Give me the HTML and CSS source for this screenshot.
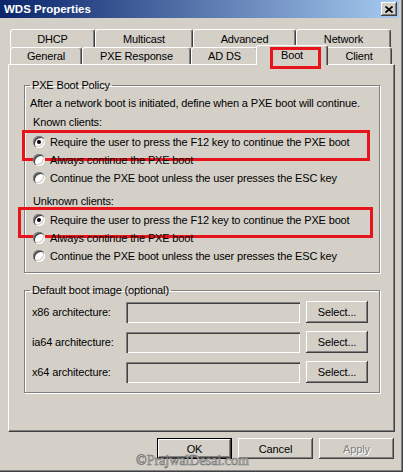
FILE: index.html
```html
<!DOCTYPE html>
<html>
<head>
<meta charset="utf-8">
<title>WDS Properties</title>
<link rel="stylesheet" href="styles.css">
</head>
<body>
<div class="window">
  <div class="titlebar">
    <span class="title">WDS Properties</span>
    <span class="close"><svg width="8" height="7" viewBox="0 0 8 7"><path d="M0.5 0.5L7.5 6.5M7.5 0.5L0.5 6.5" stroke="#000" stroke-width="1.7"/></svg></span>
  </div>
  <div class="content">
    <div class="tabs">
      <div class="tabrow row1">
        <div class="tab t-dhcp">DHCP</div>
        <div class="tab t-multicast">Multicast</div>
        <div class="tab t-advanced">Advanced</div>
        <div class="tab t-network">Network</div>
      </div>
      <div class="tabrow row2">
        <div class="tab t-general">General</div>
        <div class="tab t-pxe">PXE Response</div>
        <div class="tab t-adds">AD DS</div>
        <div class="tab t-boot sel">Boot</div>
        <div class="tab t-client">Client</div>
      </div>
    </div>
    <div class="panel">
      <fieldset class="group g1">
        <legend>PXE Boot Policy</legend>
        <div class="gbody">
          <div class="desc">After a network boot is initiated, define when a PXE boot will continue.</div>
          <div class="sub">Known clients:</div>
          <div class="radios">
            <div class="radio-row hl1"><span class="radio on"></span><span>Require the user to press the F12 key to continue the PXE boot</span></div>
            <div class="radio-row"><span class="radio"></span><span>Always continue the PXE boot</span></div>
            <div class="radio-row"><span class="radio"></span><span>Continue the PXE boot unless the user presses the ESC key</span></div>
          </div>
          <div class="sub sub2">Unknown clients:</div>
          <div class="radios radios2">
            <div class="radio-row hl2"><span class="radio on"></span><span>Require the user to press the F12 key to continue the PXE boot</span></div>
            <div class="radio-row"><span class="radio"></span><span>Always continue the PXE boot</span></div>
            <div class="radio-row"><span class="radio"></span><span>Continue the PXE boot unless the user presses the ESC key</span></div>
          </div>
        </div>
      </fieldset>
      <fieldset class="group g2">
        <legend>Default boot image (optional)</legend>
        <div class="gbody">
          <div class="row"><span class="label">x86 architecture:</span><span class="field"></span><span class="btn small">Select...</span></div>
          <div class="row"><span class="label">ia64 architecture:</span><span class="field"></span><span class="btn small">Select...</span></div>
          <div class="row"><span class="label">x64 architecture:</span><span class="field"></span><span class="btn small">Select...</span></div>
        </div>
      </fieldset>
    </div>
    <div class="footer">
      <span class="btn big default">OK</span>
      <span class="btn big">Cancel</span>
      <span class="btn big disabled">Apply</span>
    </div>
  </div>
  <div class="watermark">©PrajwalDesai.com</div>
</div>
</body>
</html>
```
FILE: styles.css
```css
* { box-sizing: border-box; }
html, body { margin: 0; padding: 0; }
body {
  background: #d4d0c8;
  font-family: "Liberation Sans", Arial, sans-serif;
  font-size: 11px;
  letter-spacing: -0.15px;
  color: #000;
}
.window {
  width: 403px;
  height: 472px;
  position: relative;
  background: #d4d0c8;
  box-shadow: inset -1px -1px 0 #404040, inset -2px -2px 0 #808080;
  overflow: hidden;
}
.titlebar {
  height: 18px;
  margin-right: 4px;
  background: linear-gradient(to right, #0a246a, #a6caf0);
  display: flex;
  align-items: center;
  justify-content: space-between;
  padding: 0 2px 0 4px;
}
.title {
  color: #fff;
  font-weight: bold;
  font-size: 11.5px;
  letter-spacing: 0;
}
.close {
  width: 16px;
  height: 14px;
  background: #d4d0c8;
  box-shadow: inset -1px -1px 0 #404040, inset 1px 1px 0 #fff, inset -2px -2px 0 #808080;
  display: flex;
  align-items: center;
  justify-content: center;
}
.close svg { display: block; }
.content { padding: 11px 8px 0 8px; }
.tabs { padding-left: 2px; }
.tabrow { display: flex; align-items: flex-start; height: 18px; }
.row2 { height: 17px; }
.tab {
  height: 100%;
  background: #d4d0c8;
  border-top: 1px solid #fff;
  border-left: 1px solid #fff;
  border-right: 1px solid #404040;
  box-shadow: inset -1px 0 0 #808080;
  border-radius: 3px 3px 0 0;
  display: flex;
  align-items: center;
  justify-content: center;
  white-space: nowrap;
  flex: none;
}
.t-dhcp { width: 85px; }
.t-multicast { width: 98px; }
.t-advanced { width: 103px; }
.t-network { width: 95px; }
.t-general { width: 72px; }
.t-pxe { width: 109px; }
.t-adds { width: 67px; }
.t-boot { width: 68px; }
.t-client { width: 66px; }
.tab.sel {
  position: relative;
  z-index: 2;
  width: 72px;
  height: 20px;
  margin: -2px -2px 0 -2px;
  padding-bottom: 2px;
}
.tab.sel::after {
  content: "";
  position: absolute;
  left: 13px;
  top: 1px;
  width: 45px;
  height: 16px;
  border: 3px solid #e8141c;
}
.panel {
  height: 368px;
  border-top: 1px solid #fff;
  border-left: 1px solid #fff;
  border-right: 1px solid #404040;
  border-bottom: 1px solid #404040;
  box-shadow: inset -1px -1px 0 #808080;
  padding: 13px 14px 0 15px;
}
.group {
  margin: 0;
  padding: 0;
  border: 1px solid #808080;
  box-shadow: inset 1px 1px 0 #fff, 1px 1px 0 #fff;
  min-width: 0;
}
.group legend {
  margin-left: 5px;
  padding: 0 2px;
  line-height: 14px;
  height: 14px;
}
.g1 .gbody { padding: 4px 0 7px 5px; }
.desc { line-height: 14px; white-space: nowrap; }
.sub { line-height: 14px; margin-top: 5px; padding-left: 3px; }
.sub2 { margin-top: 7px; }
.radios { margin-top: 4px; }
.radios2 { margin-top: 3px; }
.radio-row {
  position: relative;
  height: 18px;
  display: flex;
  align-items: center;
  gap: 5px;
  padding-left: 3px;
  white-space: nowrap;
}
.radio {
  position: relative;
  flex: none;
  width: 12px;
  height: 12px;
  border-radius: 50%;
  background: #fff;
  box-shadow: inset 1px 1px 0 #808080, inset 2px 2px 0 #404040, inset -1px -1px 0 #fff, inset -2px -2px 0 #d4d0c8;
}
.radio.on::after {
  content: "";
  position: absolute;
  left: 4px;
  top: 4px;
  width: 4px;
  height: 4px;
  border-radius: 50%;
  background: #000;
}
.hl1::after, .hl2::after {
  content: "";
  position: absolute;
  border: 3px solid #e8141c;
  height: 25px;
}
.hl1::after { left: -8px; top: -3px; width: 342px; }
.hl2::after { left: -12px; top: -4px; width: 349px; }
.g2 { margin-top: 10px; }
.g2 .gbody {
  padding: 4px 11px 9px 7px;
  display: flex;
  flex-direction: column;
  gap: 8px;
}
.row { display: flex; align-items: center; height: 22px; }
.label { width: 94px; flex: none; white-space: nowrap; }
.field {
  width: 174px;
  height: 21px;
  margin-right: 6px;
  background: #d4d0c8;
  box-shadow: inset 1px 1px 0 #808080, inset 2px 2px 0 #404040, inset -1px -1px 0 #fff, inset -2px -2px 0 #d4d0c8;
}
.btn {
  background: #d4d0c8;
  box-shadow: inset -1px -1px 0 #404040, inset 1px 1px 0 #fff, inset -2px -2px 0 #808080;
  display: flex;
  align-items: center;
  justify-content: center;
  flex: none;
}
.btn.small { width: 62px; height: 22px; }
.footer {
  display: flex;
  justify-content: flex-end;
  gap: 6px;
  padding-top: 6px;
  margin-right: 1px;
}
.btn.big { width: 75px; height: 21px; }
.btn.default {
  box-shadow: inset 0 0 0 1px #000, inset -2px -2px 0 #404040, inset 2px 2px 0 #fff, inset -3px -3px 0 #808080;
}
.btn.disabled {
  color: #808080;
  text-shadow: 1px 1px 0 #fff;
}
.watermark {
  position: absolute;
  left: 136px;
  top: 454px;
  font-family: "Liberation Serif", "Times New Roman", serif;
  font-size: 14px;
  line-height: 14px;
  letter-spacing: 0;
  color: rgba(228, 226, 220, 0.85);
  -webkit-text-stroke: 0.7px #7a7a7a;
}
```
